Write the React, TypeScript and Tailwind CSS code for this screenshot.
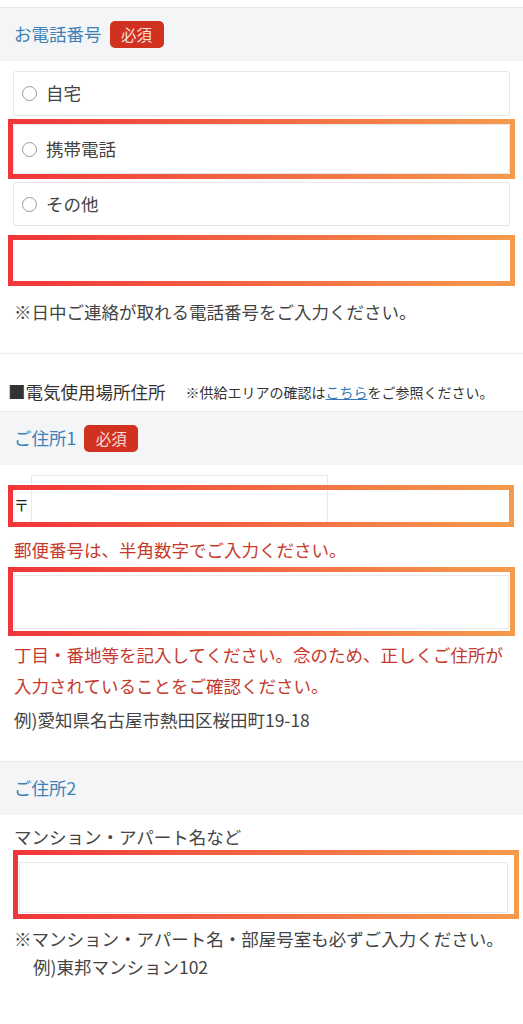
const font = "font-['Noto_Sans_CJK_JP','Noto_Sans',sans-serif]";
const grad = 'border-[5px] border-solid [border-image:linear-gradient(90deg,#f0363a,#f59a4c)_1]';

const Badge = () => (
  <span className="ml-[8px] inline-flex h-[27px] w-[54px] items-center justify-center rounded-[5px] bg-[#d1321f] text-[15.5px] text-[#f8dcd6]">
    必須
  </span>
);

const Header = ({ title, required }: { title: string; required?: boolean }) => (
  <div className="flex h-[54px] items-center border-t border-[#e6e9ec] bg-[#f3f5f7] px-[14px]">
    <span className="text-[17.5px] text-[#3f7fb3]">{title}</span>
    {required && <Badge />}
  </div>
);

const Radio = ({ label, className }: { label: string; className?: string }) => (
  <div
    className={`flex items-center rounded-[3px] border border-[#e3e5e8] bg-white px-[8px] ${className ?? ''}`}
  >
    <span className="h-[15px] w-[15px] rounded-full border border-[#9a9a9a]" />
    <span className="ml-[9px] text-[17.5px] text-[#444]">{label}</span>
  </div>
);

export default function App() {
  return (
    <div className={`${font} min-h-[1024px] w-[523px] bg-white pt-[7px] text-[#444]`}>
      <Header title="お電話番号" required />

      <div className="px-[13px] pt-[10px]">
        <Radio label="自宅" className="h-[45px]" />
      </div>
      <div className={`mx-[8px] mt-[3px] h-[60px] ${grad}`}>
        <Radio label="携帯電話" className="h-full" />
      </div>
      <div className="px-[13px] pt-[3px]">
        <Radio label="その他" className="h-[44px]" />
      </div>
      <div className={`mx-[8px] mt-[9px] h-[51px] bg-white ${grad}`} />

      <p className="mt-[14px] px-[14px] text-[17.5px] leading-[24px]">※日中ご連絡が取れる電話番号をご入力ください。</p>

      <div className="mt-[29px] border-t border-[#eceef0]" />
      <div className="flex h-[57px] items-center px-[8px] pt-[20px]">
        <span className="text-[17.5px] text-[#333]">■電気使用場所住所</span>
        <span className="ml-[20px] text-[14px] text-[#333]">
          ※供給エリアの確認は<span className="text-[#3a78b5] underline">こちら</span>をご参照ください。
        </span>
      </div>

      <Header title="ご住所1" required />

      <div className="relative mt-[10px] h-[51px] px-[14px]">
        <div className="flex h-full items-center">
          <span className="mt-[10px] w-[17px] text-[15px] text-[#222]">〒</span>
          <div className="h-full w-[297px] border border-[#e6e8eb] bg-white" />
        </div>
        <div className={`absolute left-[8px] right-[9px] top-[10px] h-[42px] ${grad}`} />
      </div>

      <p className="mt-[12px] px-[14px] text-[17.5px] leading-[24px] text-[#c5392c]">郵便番号は、半角数字でご入力ください。</p>

      <div className={`mx-[8px] mt-[5px] h-[69px] px-[1px] pt-[3px] ${grad}`}>
        <div className="h-[54px] border border-[#e6e8eb] bg-white" />
      </div>

      <p className="mt-[3px] px-[14px] text-[17.5px] leading-[31px] text-[#c5392c]">
        丁目・番地等を記入してください。念のため、正しくご住所が入力されていることをご確認ください。
      </p>

      <p className="mt-[3px] px-[14px] text-[17.5px] leading-[31px]">例)愛知県名古屋市熱田区桜田町19-18</p>

      <div className="mt-[26px]">
        <Header title="ご住所2" />
      </div>

      <p className="mt-[9px] px-[14px] text-[17.5px] leading-[26px]">マンション・アパート名など</p>

      <div className={`ml-[13px] mr-[4px] h-[69px] pl-[1px] pr-[6px] pt-[7px] ${grad}`}>
        <div className="h-[51px] border border-[#e6e8eb] bg-white" />
      </div>

      <p className="mt-[6px] px-[14px] text-[17.5px] leading-[28px]">※マンション・アパート名・部屋号室も必ずご入力ください。</p>
      <p className="px-[33px] text-[17.5px] leading-[28px]">例)東邦マンション102</p>
    </div>
  );
}
